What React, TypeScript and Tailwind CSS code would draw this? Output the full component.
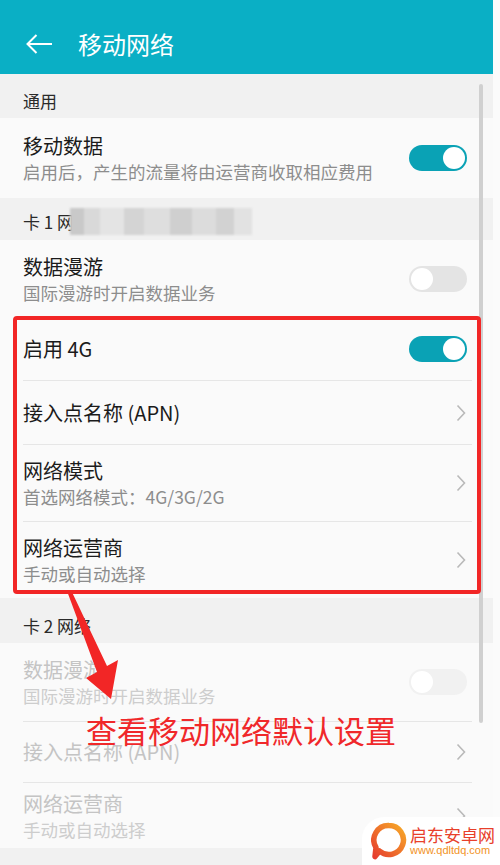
import React from 'react';

type RowProps = {
  title: string;
  sub?: string;
  right?: 'on' | 'off' | 'chevron';
  dim?: boolean;
  h: string;
  divider?: boolean;
};

function Toggle({ on, dim }: { on: boolean; dim?: boolean }) {
  if (on) {
    return (
      <div className="w-[58px] h-[26px] rounded-full bg-[#0aa2b5] flex items-center justify-end px-[2px]">
        <div className="w-[22px] h-[22px] rounded-full bg-white" />
      </div>
    );
  }
  return (
    <div
      className={
        dim
          ? 'w-[58px] h-[26px] rounded-full bg-[#f1f1f1] flex items-center px-[2px]'
          : 'w-[58px] h-[26px] rounded-full bg-[#e4e4e4] flex items-center px-[2px]'
      }
    >
      <div className="w-[22px] h-[22px] rounded-full bg-white" />
    </div>
  );
}

function Chevron() {
  return (
    <svg width="10" height="18" viewBox="0 0 10 18" className="mr-[1px]">
      <path d="M1.5 1.5 L8.5 9 L1.5 16.5" fill="none" stroke="#b9b9b9" strokeWidth="1.6" />
    </svg>
  );
}

function Row({ title, sub, right, dim, h, divider = true }: RowProps) {
  return (
    <div className={`bg-[#fafafa] ${h} flex`}>
      <div
        className={
          divider
            ? 'ml-[23px] mr-[21px] flex-1 flex items-center justify-between pr-[5px] border-b border-[#e6e6e6]'
            : 'ml-[23px] mr-[21px] flex-1 flex items-center justify-between pr-[5px]'
        }
      >
        <div className="flex flex-col">
          <span className={dim ? 'text-[20px] leading-[28px] text-[#c4c4c4]' : 'text-[20px] leading-[28px] text-[#1b1b1b]'}>
            {title}
          </span>
          {sub && (
            <span className={dim ? 'text-[17.5px] leading-[24px] text-[#cdcdcd]' : 'text-[17.5px] leading-[24px] text-[#8d8d8d]'}>
              {sub}
            </span>
          )}
        </div>
        {right === 'on' && <Toggle on />}
        {right === 'off' && <Toggle on={false} dim={dim} />}
        {right === 'chevron' && <Chevron />}
      </div>
    </div>
  );
}

function Section({ h, children }: { h: string; children: React.ReactNode }) {
  return (
    <div className={`bg-[#f1f1f1] ${h} flex items-end pb-[5px] pl-[23px]`}>
      <span className="text-[17px] leading-[24px] text-[#2a2a2a]">{children}</span>
    </div>
  );
}

export default function App() {
  return (
    <div className="relative w-[500px] h-[865px] overflow-hidden bg-[#fbfbfb] font-['Noto_Sans_CJK_SC','Noto_Sans',sans-serif] flex">
      <div className="w-[493px] flex flex-col">
        {/* title bar */}
        <div className="h-[74px] bg-[#0aafc5] flex items-center pl-[25px] pt-[13px]">
          <svg width="28" height="22" viewBox="0 0 28 22">
            <path d="M27 11 H2.5 M11.5 2 L2.5 11 L11.5 20" fill="none" stroke="#ffffff" strokeWidth="2" strokeLinejoin="miter" />
          </svg>
          <span className="ml-[25px] text-[24px] leading-none text-white">移动网络</span>
        </div>

        <Section h="h-[44px]">通用</Section>
        <Row title="移动数据" sub="启用后，产生的流量将由运营商收取相应费用" right="on" h="h-[80px]" divider={false} />

        <Section h="h-[42px]">
          <span className="flex items-center">
            卡 1 网
            <span className="ml-[-4px] inline-flex h-[27px] w-[182px] blur-[1px]">
              <span className="w-[14px] bg-[#c9c9c9]" />
              <span className="w-[16px] bg-[#d9d9d9]" />
              <span className="w-[24px] bg-[#e4e4e4]" />
              <span className="w-[20px] bg-[#d4d4d4]" />
              <span className="w-[26px] bg-[#dedede]" />
              <span className="w-[22px] bg-[#cfcfcf]" />
              <span className="w-[24px] bg-[#dcdcdc]" />
              <span className="w-[18px] bg-[#d2d2d2]" />
              <span className="w-[18px] bg-[#e2e2e2]" />
            </span>
          </span>
        </Section>
        <Row title="数据漫游" sub="国际漫游时开启数据业务" right="off" h="h-[78px]" />
        <Row title="启用 4G" right="on" h="h-[63px]" />
        <Row title="接入点名称 (APN)" right="chevron" h="h-[64px]" />
        <Row title="网络模式" sub="首选网络模式：4G/3G/2G" right="chevron" h="h-[77px]" />
        <Row title="网络运营商" sub="手动或自动选择" right="chevron" h="h-[76px]" divider={false} />

        <Section h="h-[45px]">卡 2 网络</Section>
        <Row title="数据漫游" sub="国际漫游时开启数据业务" right="off" dim h="h-[79px]" />
        <Row title="接入点名称 (APN)" right="chevron" dim h="h-[61px]" />
        <Row title="网络运营商" sub="手动或自动选择" right="chevron" dim h="h-[65px]" divider={false} />
        <div className="flex-1 bg-[#f1f1f1]" />
      </div>
      <div className="flex-1 bg-[#fbfbfb]" />

      {/* scrollbar */}
      <div className="absolute left-[479px] top-[84px] w-[4px] h-[639px] rounded-full bg-[#d0d0d0]" />

      {/* red annotation box */}
      <div className="absolute left-[13px] top-[316px] w-[468px] h-[278px] border-[4px] border-[#f22626] rounded-[4px]" />

      {/* red arrow */}
      <svg className="absolute left-0 top-0" width="500" height="865" viewBox="0 0 500 865" style={{ pointerEvents: 'none' }}>
        <polygon points="67,591 71,590 107,666 118,660 111,699 86,678 97,672" fill="#f22626" />
      </svg>

      <div className="absolute left-[86px] top-[713px] text-[31px] leading-[34px] text-[#f0282a] whitespace-nowrap">
        查看移动网络默认设置
      </div>

      {/* watermark */}
      <div className="absolute left-[362px] top-[817px] w-[138px] h-[48px] bg-white rounded-tl-[22px] flex items-center pl-[9px]">
        <svg width="36" height="38" viewBox="0 0 36 38">
          <defs>
            <linearGradient id="wm" x1="1" y1="0" x2="0" y2="1">
              <stop offset="0" stopColor="#f7a928" />
              <stop offset="1" stopColor="#e63d2e" />
            </linearGradient>
          </defs>
          <path d="M18 3.5 A14.5 14.5 0 1 1 8.5 29 L4 34.5 L5 25.5 A14.5 14.5 0 0 1 18 3.5 Z" fill="none" stroke="url(#wm)" strokeWidth="5.5" strokeLinejoin="round" />
        </svg>
        <div className="ml-[3px] flex flex-col">
          <span className="text-[17px] leading-[19px] text-[#e8402b]">启东安卓网</span>
          <span className="text-[11px] leading-[13px] text-[#f29224] font-['Liberation_Sans',sans-serif]">www.qdltdq.com</span>
        </div>
      </div>
    </div>
  );
}
